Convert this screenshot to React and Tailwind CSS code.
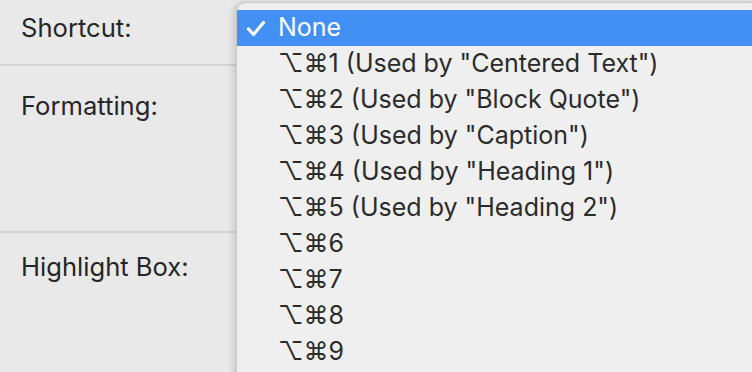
import React from "react";

const items = [
  "⌥⌘1 (Used by \"Centered Text\")",
  "⌥⌘2 (Used by \"Block Quote\")",
  "⌥⌘3 (Used by \"Caption\")",
  "⌥⌘4 (Used by \"Heading 1\")",
  "⌥⌘5 (Used by \"Heading 2\")",
  "⌥⌘6",
  "⌥⌘7",
  "⌥⌘8",
  "⌥⌘9",
];

export default function App() {
  return (
    <div
      className="relative w-[752px] h-[372px] overflow-hidden bg-[#e9e9e9] text-[#262626]"
      style={{ fontFamily: "Inter, 'DejaVu Sans', sans-serif" }}
    >
      <div className="flex flex-col w-full">
        <div className="h-[64px] flex items-center pl-[21px] text-[25.6px] pb-[8px]">Shortcut:</div>
        <div className="h-[2px] bg-[#d3d3d3]" />
        <div className="h-[165px] pl-[21px] pt-[25px] text-[25.6px] leading-[30px]">Formatting:</div>
        <div className="h-[2px] bg-[#d3d3d3]" />
        <div className="pl-[21px] pt-[19px] text-[25.6px] leading-[30px]">Highlight Box:</div>
      </div>

      <div className="absolute left-[236px] top-[2px] w-[528px] h-[390px] rounded-[10px] bg-[#efefef] border border-[#c9c9c9] shadow-[-3px_0_6px_rgba(0,0,0,0.14)] pt-[7px] overflow-hidden">
        <div className="h-[36px] bg-[#4290f3] flex items-center text-white text-[25px]">
          <svg width="20" height="17" viewBox="0 0 20 17" className="ml-[9px] mr-[12px]">
            <polyline points="2.5,9 7.5,14.5 17.5,2.5" fill="none" stroke="white" strokeWidth="3.2" strokeLinecap="round" strokeLinejoin="round" />
          </svg>
          <span>None</span>
        </div>
        {items.map((t) => (
          <div key={t} className="h-[36px] flex items-center pl-[41px] text-[25px] text-[#2b2b2b]">
            {t}
          </div>
        ))}
      </div>
    </div>
  );
}
